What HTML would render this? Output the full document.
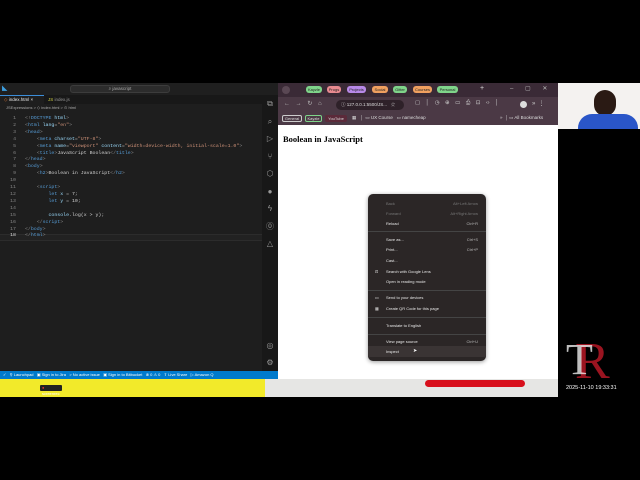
<!DOCTYPE html>
<html><head><style>
*{margin:0;padding:0;box-sizing:border-box}
body{width:640px;height:480px;background:#000;position:relative;overflow:hidden;font-family:"Liberation Sans",sans-serif}
.a{position:absolute}
.code{font-family:"Liberation Mono",monospace;font-size:4.9px;color:#cfcfcf;white-space:pre}
.ln{position:absolute;left:0;width:16px;text-align:right;font-family:"Liberation Mono",monospace;font-size:4.9px;color:#858585;white-space:pre}
.t{color:#569cd6}.s{color:#ce9178}.at{color:#9cdcfe}.g{color:#808080}
.mi{position:absolute;left:18px;font-size:4px;color:#e8e8e8}
.mk{position:absolute;right:8px;font-size:4px;color:#bbb}
.sep{position:absolute;left:0;right:0;height:1px;background:#444}
.pill{position:absolute;top:3px;height:7px;border-radius:3px;font-size:4px;line-height:7px;text-align:center;color:#222}
</style></head><body>
<!-- VS Code -->
<div class="a" style="left:0;top:83px;width:278px;height:288px;background:#1e1e1e"></div>
<div class="a" style="left:0;top:83px;width:278px;height:12px;background:#1f1f1f"></div>
<div class="a" style="left:2px;top:85px;width:6px;height:7px;color:#3c9ee0;font-size:7px;line-height:7px">◣</div>
<div class="a" style="left:70px;top:85px;width:100px;height:8px;background:#2c2c2c;border:1px solid #3c3c3c;border-radius:3px;font-size:4.5px;color:#aaa;text-align:center;line-height:6px">⌕ javascript</div>
<div class="a" style="left:0;top:95px;width:262px;height:9px;background:#181818"></div>
<div class="a" style="left:0;top:95px;width:44px;height:9px;background:#1e1e1e;border-top:1px solid #3c8dd8;font-size:4.5px;color:#eee;line-height:8px;padding-left:4px"><span style="color:#e37933">◇</span> index.html ×</div>
<div class="a" style="left:48px;top:95px;font-size:4.5px;color:#999;line-height:9px"><span style="color:#cbcb41">JS</span> index.js</div>
<div class="a" style="left:6px;top:105px;font-size:4px;color:#aaa">JSExpressions &gt; ◇ index.html &gt; ⊙ html</div>
<div class="a" style="left:262px;top:95px;width:16px;height:276px;background:#181818;color:#999;font-size:8px;text-align:center;line-height:17.5px">⧉<br>⌕<br>▷<br>⑂<br>⬡<br>●<br>ϟ<br>⓪<br>△</div>
<div class="a" style="left:262px;top:337px;width:16px;color:#999;font-size:8px;text-align:center;line-height:17px">◎<br>⚙</div>
<div class="a" style="left:0;top:234px;width:262px;height:7px;background:#222;border-top:1px solid #2c2c2c;border-bottom:1px solid #2c2c2c"></div>
<div class="ln a" style="top:116px;line-height:6.9px">1
2
3
4
5
6
7
8
9
10
11
12
13
14
15
16
17
<span style="color:#ddd">18</span></div>
<div class="code a" style="left:25px;top:116px;line-height:6.9px"><span class="g">&lt;!</span><span class="t">DOCTYPE</span> <span class="at">html</span><span class="g">&gt;</span>
<span class="g">&lt;</span><span class="t">html</span> <span class="at">lang</span>=<span class="s">"en"</span><span class="g">&gt;</span>
<span class="g">&lt;</span><span class="t">head</span><span class="g">&gt;</span>
    <span class="g">&lt;</span><span class="t">meta</span> <span class="at">charset</span>=<span class="s">"UTF-8"</span><span class="g">&gt;</span>
    <span class="g">&lt;</span><span class="t">meta</span> <span class="at">name</span>=<span class="s">"viewport"</span> <span class="at">content</span>=<span class="s">"width=device-width, initial-scale=1.0"</span><span class="g">&gt;</span>
    <span class="g">&lt;</span><span class="t">title</span><span class="g">&gt;</span>JavaScript Boolean<span class="g">&lt;/</span><span class="t">title</span><span class="g">&gt;</span>
<span class="g">&lt;/</span><span class="t">head</span><span class="g">&gt;</span>
<span class="g">&lt;</span><span class="t">body</span><span class="g">&gt;</span>
    <span class="g">&lt;</span><span class="t">h2</span><span class="g">&gt;</span>Boolean in JavaScript<span class="g">&lt;/</span><span class="t">h2</span><span class="g">&gt;</span>

    <span class="g">&lt;</span><span class="t">script</span><span class="g">&gt;</span>
        <span class="t">let</span> <span class="at">x</span> = 7;
        <span class="t">let</span> <span class="at">y</span> = 10;

        <span class="at">console</span>.log(x &gt; y);
    <span class="g">&lt;/</span><span class="t">script</span><span class="g">&gt;</span>
<span class="g">&lt;/</span><span class="t">body</span><span class="g">&gt;</span>
<span class="g">&lt;/</span><span class="t">html</span><span class="g">&gt;</span></div>
<div class="a" style="left:0;top:371px;width:278px;height:8px;background:#007acc;font-size:4px;color:#fff;line-height:8px;white-space:pre;padding-left:3px">✓   ⚲ Launchpad   ▣ Sign in to Jira   &gt; No active issue   ▣ Sign in to Bitbucket   ⊗ 0 ⚠ 0   ⇪ Live Share   ▷ Amazon Q</div>
<!-- bottom band -->
<div class="a" style="left:0;top:379px;width:265px;height:18px;background:#f2ea2a"></div>
<div class="a" style="left:40px;top:385px;width:22px;height:6px;background:#222;border-radius:1px;font-size:4px;color:#fff;line-height:6px;padding-left:2px"><span style="color:#e33">●</span> screenrec</div>
<div class="a" style="left:265px;top:379px;width:293px;height:18px;background:#e6e6e4"></div>
<div class="a" style="left:425px;top:380px;width:100px;height:7px;background:#d8101c;border-radius:4px"></div>
<!-- Chrome -->
<div class="a" style="left:278px;top:83px;width:280px;height:14px;background:#3a2a36"></div>
<div class="a" style="left:282px;top:86px;width:8px;height:8px;border-radius:4px;background:#5a4854"></div>
<div class="pill" style="left:306px;top:86px;width:16px;background:#7fd48a">Kayzle</div>
<div class="pill" style="left:327px;top:86px;width:14px;background:#e88a90">Progs</div>
<div class="pill" style="left:347px;top:86px;width:19px;background:#b889e8">Projects</div>
<div class="pill" style="left:372px;top:86px;width:16px;background:#f0a060">Social</div>
<div class="pill" style="left:393px;top:86px;width:14px;background:#7fd48a">Gitter</div>
<div class="pill" style="left:413px;top:86px;width:19px;background:#f0a060">Courses</div>
<div class="pill" style="left:437px;top:86px;width:21px;background:#7fd48a">Personal</div>
<div class="a" style="left:480px;top:85px;color:#ddd;font-size:7px">+</div>
<div class="a" style="left:510px;top:85px;color:#bbb;font-size:6px;word-spacing:10px">– ▢ ✕</div>
<div class="a" style="left:278px;top:97px;width:280px;height:16px;background:#4b3945"></div>
<div class="a" style="left:284px;top:100px;color:#bbb;font-size:6px;word-spacing:4px">← → ↻ ⌂</div>
<div class="a" style="left:336px;top:100px;width:68px;height:10px;border-radius:5px;background:#2e2129;font-size:4.5px;color:#ddd;line-height:10px;padding-left:5px">ⓘ 127.0.0.1:5500/JS...&nbsp;&nbsp;&nbsp;☆</div>
<div class="a" style="left:415px;top:100px;color:#ccc;font-size:5.5px;word-spacing:4px">▢ │ ◷ ⊕ ▭ ⎙ ⊡ ‹› │</div>
<div class="a" style="left:520px;top:101px;width:7px;height:7px;border-radius:4px;background:#ddd"></div>
<div class="a" style="left:532px;top:100px;color:#ccc;font-size:6px">»&nbsp;&nbsp;⋮</div>
<div class="a" style="left:278px;top:113px;width:280px;height:12px;background:#4b3945"></div>
<div class="a" style="left:282px;top:115px;width:20px;height:7px;border:1px solid #ccc;border-radius:2px;font-size:4px;color:#ddd;line-height:5px;text-align:center">General</div>
<div class="a" style="left:305px;top:115px;width:17px;height:7px;border:1px solid #7fd48a;border-radius:2px;font-size:4px;color:#ddd;line-height:5px;text-align:center">Kayzle</div>
<div class="a" style="left:325px;top:115px;width:22px;height:7px;background:#5b2a3a;border-radius:2px;font-size:4px;color:#ddd;line-height:7px;text-align:center">YouTube</div>
<div class="a" style="left:352px;top:115px;font-size:4.5px;color:#ddd;white-space:pre">▦   │  ▭ UX Course   ▭ namecheap</div>
<div class="a" style="left:500px;top:115px;font-size:4.5px;color:#ddd;white-space:pre">»  │ ▭ All Bookmarks</div>
<div class="a" style="left:278px;top:125px;width:280px;height:254px;background:#fff"></div>
<div class="a" style="left:283px;top:134px;font-family:'Liberation Serif',serif;font-weight:bold;font-size:8.5px;color:#000">Boolean in JavaScript</div>
<!-- context menu -->
<div class="a" style="left:368px;top:194px;width:118px;height:167px;background:#2b2626;border-radius:5px;box-shadow:0 1px 4px rgba(0,0,0,.4)">
<div class="mi" style="top:7px;color:#777">Back</div><div class="mk" style="top:7px;color:#777">Alt+Left Arrow</div>
<div class="mi" style="top:17px;color:#777">Forward</div><div class="mk" style="top:17px;color:#777">Alt+Right Arrow</div>
<div class="mi" style="top:27px">Reload</div><div class="mk" style="top:27px">Ctrl+R</div>
<div class="sep" style="top:37px"></div>
<div class="mi" style="top:43px">Save as...</div><div class="mk" style="top:43px">Ctrl+S</div>
<div class="mi" style="top:53px">Print...</div><div class="mk" style="top:53px">Ctrl+P</div>
<div class="mi" style="top:64px">Cast...</div>
<div class="mi" style="top:75px"><span style="position:absolute;left:-11px">⊡</span>Search with Google Lens</div>
<div class="mi" style="top:85px">Open in reading mode</div>
<div class="sep" style="top:96px"></div>
<div class="mi" style="top:101px"><span style="position:absolute;left:-11px">▭</span>Send to your devices</div>
<div class="mi" style="top:112px"><span style="position:absolute;left:-11px">▦</span>Create QR Code for this page</div>
<div class="sep" style="top:123px"></div>
<div class="mi" style="top:129px">Translate to English</div>
<div class="sep" style="top:140px"></div>
<div class="mi" style="top:145px">View page source</div><div class="mk" style="top:145px">Ctrl+U</div>
<div class="a" style="left:0;top:152px;width:118px;height:11px;background:#3a3434"></div>
<div class="mi" style="top:155px">Inspect</div>
<div class="a" style="left:45px;top:154px;color:#fff;font-size:5px">➤</div>
</div>
<!-- webcam -->
<div class="a" style="left:558px;top:83px;width:82px;height:46px;background:#f4f2f0"></div>
<div class="a" style="left:594px;top:90px;width:22px;height:26px;border-radius:11px;background:#2a1a14"></div>
<div class="a" style="left:578px;top:114px;width:60px;height:15px;border-radius:14px 14px 0 0;background:#2a56c8"></div>
<!-- logo -->
<div class="a" style="left:575px;top:336px;font-family:'Liberation Serif',serif;font-size:52px;color:#9a1420;line-height:52px">R</div>
<div class="a" style="left:566px;top:338px;font-family:'Liberation Serif',serif;font-size:44px;color:#eee;line-height:44px;opacity:.8">T</div>
<div class="a" style="left:566px;top:385px;font-size:5.5px;color:#fff">2025-11-10 19:33:31</div>
</body></html>
